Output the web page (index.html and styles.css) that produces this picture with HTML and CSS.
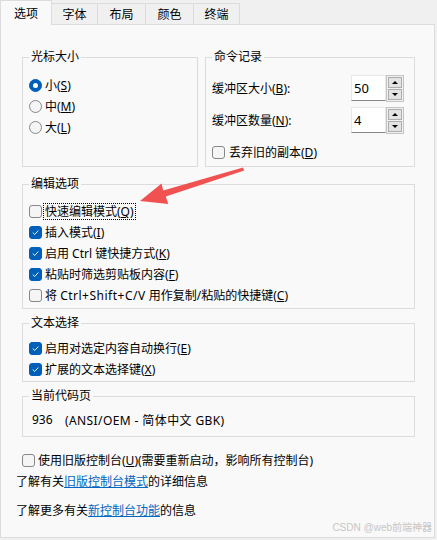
FILE: index.html
```html
<!DOCTYPE html>
<html lang="zh-CN">
<head>
<meta charset="utf-8">
<title>属性</title>
<link rel="stylesheet" href="styles.css">
</head>
<body>
<div class="tabs">
  <div class="tab active">选项</div>
  <div class="tab t47">字体</div>
  <div class="tab t49">布局</div>
  <div class="tab t49">颜色</div>
  <div class="tab t47">终端</div>
</div>
<div class="panel">
  <div class="toprow">
    <div class="group g-cursor">
      <div class="legend">光标大小</div>
      <div class="body pt17">
        <div class="row"><span class="radio on"></span><span class="lbl">小(<u>S</u>)</span></div>
        <div class="row"><span class="radio"></span><span class="lbl">中(<u>M</u>)</span></div>
        <div class="row"><span class="radio"></span><span class="lbl">大(<u>L</u>)</span></div>
      </div>
    </div>
    <div class="group g-history">
      <div class="legend">命令记录</div>
      <div class="body pt17 hist">
        <div class="spinrow">
          <span>缓冲区大小(<u>B</u>):</span>
          <div class="spin"><div class="edit">50</div><div class="arrows"><div class="btn up"></div><div class="btn down"></div></div></div>
        </div>
        <div class="spinrow">
          <span>缓冲区数量(<u>N</u>):</span>
          <div class="spin"><div class="edit">4</div><div class="arrows"><div class="btn up"></div><div class="btn down"></div></div></div>
        </div>
        <div class="row discard"><span class="check"></span><span class="lbl">丢弃旧的副本(<u>D</u>)</span></div>
      </div>
    </div>
  </div>

  <div class="group g-edit">
    <div class="legend">编辑选项</div>
    <div class="body pt16">
      <div class="row"><span class="check"></span><span class="lbl focus">快速编辑模式(<u>Q</u>)</span></div>
      <div class="row"><span class="check on"><svg viewBox="0 0 13 13"><path d="M3.6 6.9 L5.6 8.8 L9.5 4.5"/></svg></span><span class="lbl">插入模式(<u>I</u>)</span></div>
      <div class="row"><span class="check on"><svg viewBox="0 0 13 13"><path d="M3.6 6.9 L5.6 8.8 L9.5 4.5"/></svg></span><span class="lbl">启用 Ctrl 键快捷方式(<u>K</u>)</span></div>
      <div class="row"><span class="check on"><svg viewBox="0 0 13 13"><path d="M3.6 6.9 L5.6 8.8 L9.5 4.5"/></svg></span><span class="lbl">粘贴时筛选剪贴板内容(<u>F</u>)</span></div>
      <div class="row"><span class="check"></span><span class="lbl">将 <span class="wide">Ctrl+Shift+C/V</span> 用作复制/粘贴的快捷键(<u>C</u>)</span></div>
    </div>
  </div>

  <div class="group g-sel">
    <div class="legend">文本选择</div>
    <div class="body pt14">
      <div class="row"><span class="check on"><svg viewBox="0 0 13 13"><path d="M3.6 6.9 L5.6 8.8 L9.5 4.5"/></svg></span><span class="lbl">启用对选定内容自动换行(<u>E</u>)</span></div>
      <div class="row"><span class="check on"><svg viewBox="0 0 13 13"><path d="M3.6 6.9 L5.6 8.8 L9.5 4.5"/></svg></span><span class="lbl">扩展的文本选择键(<u>X</u>)</span></div>
    </div>
  </div>

  <div class="group g-code">
    <div class="legend">当前代码页</div>
    <div class="body pt12">
      <div class="row codeline"><span class="cp">936</span><span class="cpname">(ANSI/OEM - 简体中文 GBK)</span></div>
    </div>
  </div>

  <div class="row legacy"><span class="check"></span><span class="lbl">使用旧版控制台(<u>U</u>)(需要重新启动，影响所有控制台)</span></div>
  <div class="info first">了解有关<a href="#">旧版控制台模式</a>的详细信息</div>
  <div class="info second">了解更多有关<a href="#">新控制台功能</a>的信息</div>

  <div class="watermark">CSDN @web前端神器</div>
</div>

<svg class="arrow" viewBox="0 0 437 540" width="437" height="540">
  <polygon points="243,167.6 163.2,190.4 161.5,183.5 140,201 168.3,204 165.8,196.6 244.2,170.4"/>
</svg>
</body>
</html>
```

FILE: styles.css
```css
* { box-sizing: border-box; }
html, body { margin: 0; padding: 0; }
body {
  width: 437px;
  height: 540px;
  overflow: hidden;
  position: relative;
  background: #f0f0f0;
  font-family: "Noto Sans", "Noto Sans CJK SC", sans-serif;
  font-size: 12px;
  color: #000;
}
u { text-decoration: underline; text-underline-offset: 1px; }

.tabs { display: flex; align-items: flex-end; height: 24px; }
.tab {
  height: 21px;
  border: 1px solid #dcdcdc;
  border-bottom: none;
  background: #f0f0f0;
  display: flex;
  align-items: center;
  justify-content: center;
  margin-left: -1px;
  line-height: 15px;
}
.tab.active {
  width: 52px;
  height: 25px;
  margin-left: 0;
  margin-bottom: -1px;
  background: #f9f9f9;
  position: relative;
  z-index: 1;
}
.t47 { width: 47px; }
.t49 { width: 49px; }

.panel {
  width: 435px;
  height: 514px;
  border: 1px solid #dcdcdc;
  background: #f9f9f9;
  padding: 32px 19px 0 21px;
  position: relative;
}

.toprow { display: flex; gap: 7px; height: 110px; }
.group { border: 1px solid #dcdcdc; }
.g-cursor { width: 176px; }
.g-history { width: 210px; }
.legend {
  width: fit-content;
  height: 16px;
  line-height: 16px;
  margin: -9px 0 -7px 6px;
  padding: 0 2px;
  background: #f9f9f9;
}
.body { padding-left: 6px; }
.pt17 { padding-top: 17px; }
.pt16 { padding-top: 16px; padding-bottom: 2px; }
.pt14 { padding-top: 14px; padding-bottom: 1px; }
.pt12 { padding-top: 12px; padding-bottom: 6px; padding-left: 9px; }

.row { display: flex; align-items: center; height: 21px; }
.lbl {
  margin-left: 1px;
  padding: 0 1px;
  border: 1px solid transparent;
  line-height: 15px;
}
.lbl.focus { border: 1px dotted #000; }
.wide { letter-spacing: 0.5px; }

.radio, .check {
  width: 13px;
  height: 13px;
  flex: none;
  border: 1px solid #878787;
  background: #f5f5f5;
  position: relative;
}
.radio { border-radius: 50%; }
.radio.on { background: #005fb8; border-color: #005fb8; display: flex; align-items: center; justify-content: center; }
.radio.on::after { content: ""; width: 5px; height: 5px; border-radius: 50%; background: #fff; }
.check { border-radius: 3px; }
.check.on { background: #005fb8; border-color: #005fb8; }
.check svg { display: block; width: 11px; height: 11px; }
.check svg path { fill: none; stroke: #fff; stroke-width: 1.1; stroke-linecap: round; stroke-linejoin: round; }

.hist { padding-right: 10px; }
.spinrow { display: flex; align-items: center; justify-content: space-between; height: 26px; }
.spinrow + .spinrow { margin-top: 6px; }
.spin { display: flex; height: 27px; }
.edit {
  width: 35px;
  height: 26px;
  background: #fff;
  border: 1px solid #e8e8e8;
  border-bottom: 1px solid #868686;
  padding-left: 2px;
  line-height: 24px;
  font-size: 13px;
}
.arrows {
  width: 18px;
  height: 27px;
  border: 1px solid #c4c4c4;
  padding: 1px;
  display: flex;
  flex-direction: column;
  gap: 1px;
  background: #f0f0f0;
}
.btn {
  flex: 1;
  background: #e3e3e3;
  border: 1px solid #adadad;
  display: flex;
  align-items: center;
  justify-content: center;
}
.btn::after { content: ""; width: 0; height: 0; border-left: 3px solid transparent; border-right: 3px solid transparent; }
.btn.up::after { border-bottom: 3px solid #000; }
.btn.down::after { border-top: 3px solid #000; }
.discard { margin-top: 9px; }
.discard .lbl { margin-left: 2px; }

.g-edit { margin-top: 17px; }
.g-sel { margin-top: 14px; }
.g-code { margin-top: 14px; }
.cp { width: 33px; }
.cpname { letter-spacing: 0.4px; }

.legacy { margin-top: 13px; }
.legacy .lbl { margin-left: 2px; padding: 0; }
.info { height: 20px; line-height: 20px; margin-left: -6px; }
.info.first { margin-top: 1px; }
.info.second { margin-top: 9px; }
.info a { color: #0067c0; text-decoration: underline; text-underline-offset: 1px; }

.watermark {
  position: absolute;
  right: 2px;
  bottom: 2px;
  font-family: "Liberation Sans", "Noto Sans CJK SC", sans-serif;
  font-size: 10px;
  line-height: 14px;
  color: #c6c6c6;
}

.arrow { position: absolute; left: 0; top: 0; pointer-events: none; z-index: 5; }
.arrow polygon { fill: #f05252; }
```
